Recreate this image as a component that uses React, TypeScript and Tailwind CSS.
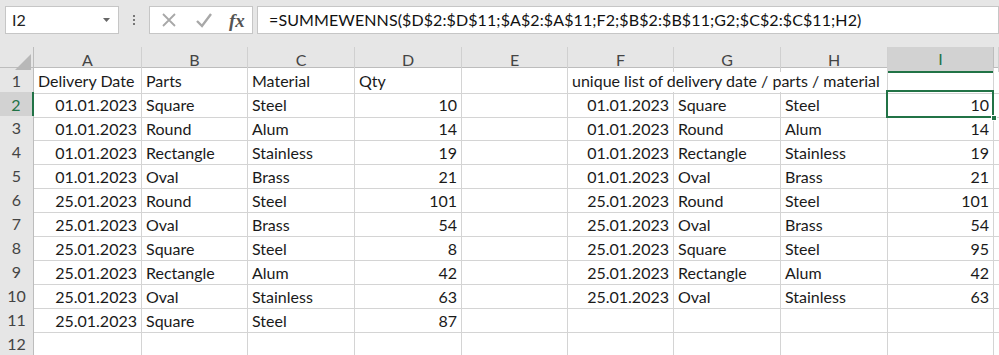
import React from 'react';

const cols = ['A', 'B', 'C', 'D', 'E', 'F', 'G', 'H', 'I', ''];

type Cell = { v: string; right?: boolean; overflow?: boolean };

const left: [string, string, string, string][] = [
  ['01.01.2023', 'Square', 'Steel', '10'],
  ['01.01.2023', 'Round', 'Alum', '14'],
  ['01.01.2023', 'Rectangle', 'Stainless', '19'],
  ['01.01.2023', 'Oval', 'Brass', '21'],
  ['25.01.2023', 'Round', 'Steel', '101'],
  ['25.01.2023', 'Oval', 'Brass', '54'],
  ['25.01.2023', 'Square', 'Steel', '8'],
  ['25.01.2023', 'Rectangle', 'Alum', '42'],
  ['25.01.2023', 'Oval', 'Stainless', '63'],
  ['25.01.2023', 'Square', 'Steel', '87'],
];

const unique: [string, string, string, string][] = [
  ['01.01.2023', 'Square', 'Steel', '10'],
  ['01.01.2023', 'Round', 'Alum', '14'],
  ['01.01.2023', 'Rectangle', 'Stainless', '19'],
  ['01.01.2023', 'Oval', 'Brass', '21'],
  ['25.01.2023', 'Round', 'Steel', '101'],
  ['25.01.2023', 'Oval', 'Brass', '54'],
  ['25.01.2023', 'Square', 'Steel', '95'],
  ['25.01.2023', 'Rectangle', 'Alum', '42'],
  ['25.01.2023', 'Oval', 'Stainless', '63'],
];

function rowCells(r: number): Cell[] {
  const cells: Cell[] = cols.map(() => ({ v: '' }));
  if (r === 1) {
    cells[0] = { v: 'Delivery Date' };
    cells[1] = { v: 'Parts' };
    cells[2] = { v: 'Material' };
    cells[3] = { v: 'Qty' };
    cells[5] = { v: 'unique list of delivery date / parts / material', overflow: true };
    cells[6] = { v: '', overflow: true };
    return cells;
  }
  const l = left[r - 2];
  if (l) {
    cells[0] = { v: l[0], right: true };
    cells[1] = { v: l[1] };
    cells[2] = { v: l[2] };
    cells[3] = { v: l[3], right: true };
  }
  const u = unique[r - 2];
  if (u) {
    cells[5] = { v: u[0], right: true };
    cells[6] = { v: u[1] };
    cells[7] = { v: u[2] };
    cells[8] = { v: u[3], right: true };
  }
  return cells;
}

const grid =
  'grid grid-cols-[34px_108px_106px_107px_107px_106px_106px_107px_107px_106px_1fr]';

export default function App() {
  const rows = Array.from({ length: 12 }, (_, i) => i + 1);

  return (
    <div className="w-[999px] h-[355px] overflow-hidden bg-white font-['Lato',sans-serif] text-[16px] text-[#1a1a1a]">
      {/* Formula bar */}
      <div className="h-[47px] bg-[#e6e6e6] flex items-start pt-[6px] pl-[5px]">
        <div className="w-[114px] h-[28px] bg-white border border-[#c6c6c6] flex items-center pl-[6px] pr-[8px] justify-between">
          <span className="text-[#222]">I2</span>
          <svg width="7" height="4" viewBox="0 0 7 4">
            <path d="M0 0h7L3.5 4z" fill="#666" />
          </svg>
        </div>
        <div className="w-[30px] h-[28px] flex flex-col items-center justify-center gap-[2px]">
          <span className="w-[2px] h-[2px] bg-[#777]" />
          <span className="w-[2px] h-[2px] bg-[#777]" />
          <span className="w-[2px] h-[2px] bg-[#777]" />
        </div>
        <div className="w-[104px] h-[28px] bg-white border border-[#c6c6c6] flex items-center pl-[11px]">
          <svg width="16" height="16" viewBox="0 0 16 16" className="mr-[18px]">
            <path d="M2 2L14 14M14 2L2 14" stroke="#a8a8a8" strokeWidth="1.8" />
          </svg>
          <svg width="18" height="16" viewBox="0 0 18 16" className="mr-[16px]">
            <path d="M2 9l5 5L16 2" stroke="#a8a8a8" strokeWidth="2.4" fill="none" />
          </svg>
          <span className="font-['Liberation_Serif',serif] italic font-bold text-[19px] text-[#555] leading-none">
            fx
          </span>
        </div>
        <div className="ml-[4px] flex-1 h-[28px] bg-white border border-[#c6c6c6] flex items-center pl-[11px] text-[16px] tracking-[0.1px] text-[#111]">
          =SUMMEWENNS($D$2:$D$11;$A$2:$A$11;F2;$B$2:$B$11;G2;$C$2:$C$11;H2)
        </div>
      </div>

      {/* Column headers */}
      <div className={`${grid} h-[21px] bg-[#e6e6e6] border-b border-[#bdbdbd]`}>
        <div className="relative border-r border-[#bdbdbd]">
          <svg width="16" height="16" viewBox="0 0 16 16" className="absolute right-[2px] bottom-[2px]">
            <path d="M16 0V16H0z" fill="#b8b8b8" />
          </svg>
        </div>
        {cols.map((c, i) => (
          <div
            key={i}
            className={
              c === 'I'
                ? 'flex items-center justify-center bg-[#d2d2d2] text-[#217346] border-r border-[#bdbdbd] border-b-2 border-b-[#217346] -mb-px'
                : 'flex items-center justify-center text-[#444] border-r border-[#d0d0d0]'
            }
          >
            {c}
          </div>
        ))}
      </div>

      {/* Rows */}
      {rows.map((r) => {
        const cells = rowCells(r);
        return (
          <div key={r} className={`${grid} h-[24px]`}>
            <div
              className={
                r === 2
                  ? 'flex items-center justify-center bg-[#d2d2d2] text-[#217346] border-b border-[#bdbdbd] border-r-2 border-r-[#217346]'
                  : 'flex items-center justify-center bg-[#e6e6e6] text-[#444] border-b border-[#bdbdbd] border-r border-r-[#bdbdbd]'
              }
            >
              {r}
            </div>
            {cells.map((cell, ci) => {
              const selected = r === 2 && ci === 8;
              return (
                <div
                  key={ci}
                  className={`relative flex items-center px-[4px] pt-px whitespace-nowrap border-b border-[#d4d4d4] ${
                    cell.overflow
                      ? 'overflow-visible z-10'
                      : selected
                        ? 'overflow-visible z-20 border-r border-r-[#d4d4d4]'
                        : 'overflow-hidden border-r border-r-[#d4d4d4]'
                  } ${cell.right ? 'justify-end' : 'justify-start'}`}
                >
                  {cell.v}
                  {selected && (
                    <>
                      <span className="absolute top-[-2px] left-[-2px] right-[-1px] bottom-[-1px] border-2 border-[#217346] pointer-events-none" />
                      <span className="absolute right-[-4px] bottom-[-4px] w-[6px] h-[6px] bg-[#217346] border border-white" />
                    </>
                  )}
                </div>
              );
            })}
          </div>
        );
      })}
    </div>
  );
}
